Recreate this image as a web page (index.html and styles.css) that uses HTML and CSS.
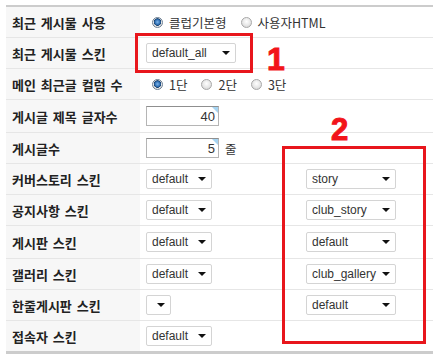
FILE: index.html
```html
<!DOCTYPE html>
<html>
<head>
  <meta charset="UTF-8">
  <title>최근 게시물 설정</title>
  <link rel="stylesheet" href="styles.css">
</head>
<body>
  <div id="settings">
    <div class="row">
      <div class="label">최근 게시물 사용</div>
      <div class="value span2">
        <label class="opt"><input type="radio" name="use" checked> 클럽기본형</label>
        <label class="opt"><input type="radio" name="use"> 사용자HTML</label>
      </div>
    </div>
    <div class="row">
      <div class="label">최근 게시물 스킨</div>
      <div class="value span2">
        <span class="sel w90"><select><option>default_all</option></select></span>
      </div>
    </div>
    <div class="row">
      <div class="label">메인 최근글 컬럼 수</div>
      <div class="value span2">
        <label class="opt"><input type="radio" name="col" checked> 1단</label>
        <label class="opt"><input type="radio" name="col"> 2단</label>
        <label class="opt"><input type="radio" name="col"> 3단</label>
      </div>
    </div>
    <div class="row tall">
      <div class="label">게시글 제목 글자수</div>
      <div class="value span2">
        <span class="num"><input type="text" value="40"></span>
      </div>
    </div>
    <div class="row">
      <div class="label">게시글수</div>
      <div class="value span2">
        <span class="num"><input type="text" value="5"></span> <span class="unit">줄</span>
      </div>
    </div>
    <div class="row">
      <div class="label">커버스토리 스킨</div>
      <div class="value"><span class="sel w66"><select><option>default</option></select></span></div>
      <div class="value side"><span class="sel w90"><select><option>story</option></select></span></div>
    </div>
    <div class="row">
      <div class="label">공지사항 스킨</div>
      <div class="value"><span class="sel w66"><select><option>default</option></select></span></div>
      <div class="value side"><span class="sel w90"><select><option>club_story</option></select></span></div>
    </div>
    <div class="row tall">
      <div class="label">게시판 스킨</div>
      <div class="value"><span class="sel w66"><select><option>default</option></select></span></div>
      <div class="value side"><span class="sel w90"><select><option>default</option></select></span></div>
    </div>
    <div class="row">
      <div class="label">갤러리 스킨</div>
      <div class="value"><span class="sel w66"><select><option>default</option></select></span></div>
      <div class="value side"><span class="sel w90"><select><option>club_gallery</option></select></span></div>
    </div>
    <div class="row">
      <div class="label">한줄게시판 스킨</div>
      <div class="value"><span class="sel w25"><select><option></option></select></span></div>
      <div class="value side"><span class="sel w90"><select><option>default</option></select></span></div>
    </div>
    <div class="row last">
      <div class="label">접속자 스킨</div>
      <div class="value span2"><span class="sel w66"><select><option>default</option></select></span></div>
    </div>

    <div class="mark mark1"></div>
    <div class="num-tag tag1">1</div>
    <div class="mark mark2"></div>
    <div class="num-tag tag2">2</div>
  </div>
</body>
</html>
```

FILE: styles.css
```css
body {
  margin: 0;
  font-family: "Liberation Sans", "Noto Sans CJK KR", sans-serif;
  font-size: 12px;
  color: #333;
  background: #fff;
}

#settings {
  position: relative;
  margin: 5px 0 0 6px;
  width: 427px;
  border-top: 2px solid #cccccc;
  border-bottom: 3px solid #cccccc;
}

.row {
  display: grid;
  grid-template-columns: 134px 166px 1fr;
  height: 30px;
  border-bottom: 1px solid #e6e6e6;
}

.row.tall {
  height: 32px;
}

.row.last {
  border-bottom: none;
}

.label {
  display: flex;
  align-items: center;
  padding-left: 6px;
  background: #f7f7f7;
  font-family: "Noto Sans CJK KR", sans-serif;
  font-weight: bold;
  font-size: 13px;
  word-spacing: 2px;
  color: #222;
}

.value {
  display: flex;
  align-items: center;
  padding-left: 6px;
  gap: 6px;
}

.value.side {
  padding-left: 0;
}

.value.span2 {
  grid-column: span 2;
}

.opt {
  display: flex;
  align-items: center;
  gap: 6px;
  margin-right: 2px;
  font-family: "Noto Sans CJK KR", sans-serif;
  font-size: 12.5px;
  color: #333;
}

.opt input {
  appearance: none;
  margin: 0 0 0 6px;
  width: 11px;
  height: 11px;
  border-radius: 50%;
  border: 1px solid #a8a8a8;
  background: radial-gradient(circle at 50% 40%, #fff 0, #e4e4e4 60%, #c8c8c8 100%);
}

.opt input:checked {
  border-color: #6d7f93;
  background: radial-gradient(circle at 50% 45%, #7fb6ea 0, #2f6fb4 2.5px, #17406d 3.5px, #e8e8e8 4px, #cfcfcf 100%);
}

.sel {
  position: relative;
  display: inline-block;
  height: 20px;
}

.sel select {
  appearance: none;
  width: 100%;
  height: 20px;
  margin: 0;
  padding: 0 0 0 5px;
  border: 1px solid #d4d4d4;
  border-radius: 2px;
  background: #fff;
  font-family: "Liberation Sans", sans-serif;
  font-size: 12px;
  color: #333;
}

.sel::after {
  content: "";
  position: absolute;
  right: 6px;
  top: 8px;
  border-left: 4px solid transparent;
  border-right: 4px solid transparent;
  border-top: 4px solid #111;
}

.w90 { width: 90px; }
.w66 { width: 66px; }
.w25 { width: 25px; }

.num {
  position: relative;
  display: inline-block;
}

.num input {
  width: 73px;
  height: 20px;
  box-sizing: border-box;
  margin: 0;
  padding: 0 3px 0 0;
  border: 1px solid #b5b5b5;
  border-top-color: #8f8f8f;
  text-align: right;
  font-family: "Liberation Sans", sans-serif;
  font-size: 13px;
  color: #333;
}

.num::after {
  content: "";
  position: absolute;
  right: 1px;
  top: 1px;
  border-left: 6px solid transparent;
  border-top: 6px solid #a6d4f2;
}

.unit {
  font-family: "Noto Sans CJK KR", sans-serif;
  font-size: 12.5px;
}

.mark {
  position: absolute;
  border: 3px solid #e8161c;
}

.mark1 {
  left: 129px;
  top: 26px;
  width: 112px;
  height: 34px;
}

.mark2 {
  left: 276px;
  top: 139px;
  width: 138px;
  height: 192px;
}

.num-tag {
  position: absolute;
  font-family: "Liberation Sans", sans-serif;
  font-weight: bold;
  color: #f2141a;
  line-height: 0.75;
  -webkit-text-stroke: 1px #f2141a;
}

.tag1 {
  left: 261px;
  top: 40px;
  font-size: 32px;
}

.tag2 {
  left: 325px;
  top: 111px;
  font-size: 31px;
}
```
